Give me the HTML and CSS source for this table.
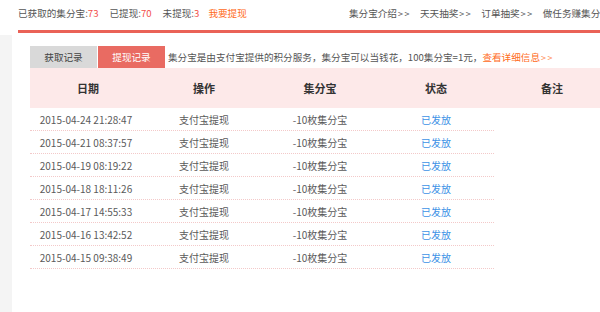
FILE: index.html
```
<!DOCTYPE html>
<html lang="zh-CN">
<head>
<meta charset="utf-8">
<title>集分宝提现记录</title>
<link rel="stylesheet" href="styles.css">
</head>
<body>
<div class="top">
  <div class="stats">
    <span class="stat">已获取的集分宝:<em class="num">73</em></span>
    <span class="stat">已提现:<em class="num">70</em></span>
    <span class="stat">未提现:<em class="num">3</em></span>
    <a class="withdraw">我要提现</a>
  </div>
  <nav class="links">
    <a>集分宝介绍<span class="gt">&gt;&gt;</span></a>
    <a>天天抽奖<span class="gt">&gt;&gt;</span></a>
    <a>订单抽奖<span class="gt">&gt;&gt;</span></a>
    <a>做任务赚集分宝<span class="gt">&gt;&gt;</span></a>
  </nav>
</div>
<div class="redbar"></div>
<div class="main">
  <aside class="side"></aside>
  <section class="content">
    <div class="tabs">
      <span class="tab">获取记录</span>
      <span class="tab active">提现记录</span>
      <p class="desc">集分宝是由支付宝提供的积分服务，集分宝可以当钱花，100集分宝=1元，<a class="more">查看详细信息<span class="gt">&gt;&gt;</span></a></p>
    </div>
    <div class="table">
      <div class="thead">
        <span>日期</span><span>操作</span><span>集分宝</span><span>状态</span><span>备注</span>
      </div>
      <div class="tr"><span>2015-04-24 21:28:47</span><span>支付宝提现</span><span>-10枚集分宝</span><span class="ok">已发放</span></div>
      <div class="tr"><span>2015-04-21 08:37:57</span><span>支付宝提现</span><span>-10枚集分宝</span><span class="ok">已发放</span></div>
      <div class="tr"><span>2015-04-19 08:19:22</span><span>支付宝提现</span><span>-10枚集分宝</span><span class="ok">已发放</span></div>
      <div class="tr"><span>2015-04-18 18:11:26</span><span>支付宝提现</span><span>-10枚集分宝</span><span class="ok">已发放</span></div>
      <div class="tr"><span>2015-04-17 14:55:33</span><span>支付宝提现</span><span>-10枚集分宝</span><span class="ok">已发放</span></div>
      <div class="tr"><span>2015-04-16 13:42:52</span><span>支付宝提现</span><span>-10枚集分宝</span><span class="ok">已发放</span></div>
      <div class="tr"><span>2015-04-15 09:38:49</span><span>支付宝提现</span><span>-10枚集分宝</span><span class="ok">已发放</span></div>
    </div>
  </section>
</div>
</body>
</html>
```
FILE: styles.css
```
html, body {
  margin: 0;
  padding: 0;
  overflow: hidden;
  background: #fff;
}
body {
  width: 600px;
  height: 312px;
  font-family: "Noto Sans CJK SC", "Microsoft YaHei", sans-serif;
  font-size: 9.6px;
  color: #555;
}
a { text-decoration: none; cursor: pointer; }
em { font-style: normal; }

.top {
  display: flex;
  align-items: center;
  height: 26px;
  margin-bottom: 4px;
  padding-left: 18px;
  white-space: nowrap;
}
.stats {
  display: flex;
  gap: 11px;
  flex: none;
  width: 331px;
  color: #555;
}
.num { color: #f2504b; }
.withdraw { color: #ff6a1a; margin-left: -2px; }
.links {
  display: flex;
  gap: 9px;
  flex: none;
}
.links a { color: #555; }
.gt {
  letter-spacing: 1.5px;
  font-size: 9px;
  margin-left: 1px;
}
.redbar {
  height: 3px;
  margin-left: 18px;
  background: #ea6257;
}
.main {
  display: flex;
  margin-top: 2px;
  height: 277px;
}
.side {
  width: 12px;
  flex: none;
  background: #f4f4f4;
}
.content {
  padding: 11px 0 0 18px;
  flex: none;
  width: 600px;
}
.tabs {
  display: flex;
  align-items: center;
  height: 22px;
  white-space: nowrap;
}
.tab {
  width: 67px;
  height: 22px;
  line-height: 22px;
  text-align: center;
  background: #d9d9d9;
  color: #444;
  margin-right: 1px;
}
.tab.active {
  background: #e96b62;
  color: #fff;
}
.desc {
  margin: 0 0 0 2px;
  color: #555;
}
.more { color: #ff6a1a; }
.more .gt { color: #ff8a50; }

.table {
  width: 580px;
}
.thead {
  display: grid;
  grid-template-columns: repeat(5, 116px);
  height: 40px;
  align-items: center;
  background: #fde9e9;
  font-size: 11px;
  font-weight: bold;
  color: #333;
  text-align: center;
}
.tr {
  display: grid;
  grid-template-columns: repeat(4, 116px);
  width: 464px;
  height: 22px;
  align-items: center;
  text-align: center;
  border-bottom: 1px dotted #f3c9c9;
  color: #5a5a5a;
  font-size: 10px;
}
.tr span:first-child { padding-right: 4px; }
.ok { color: #3d92e6; }
```
